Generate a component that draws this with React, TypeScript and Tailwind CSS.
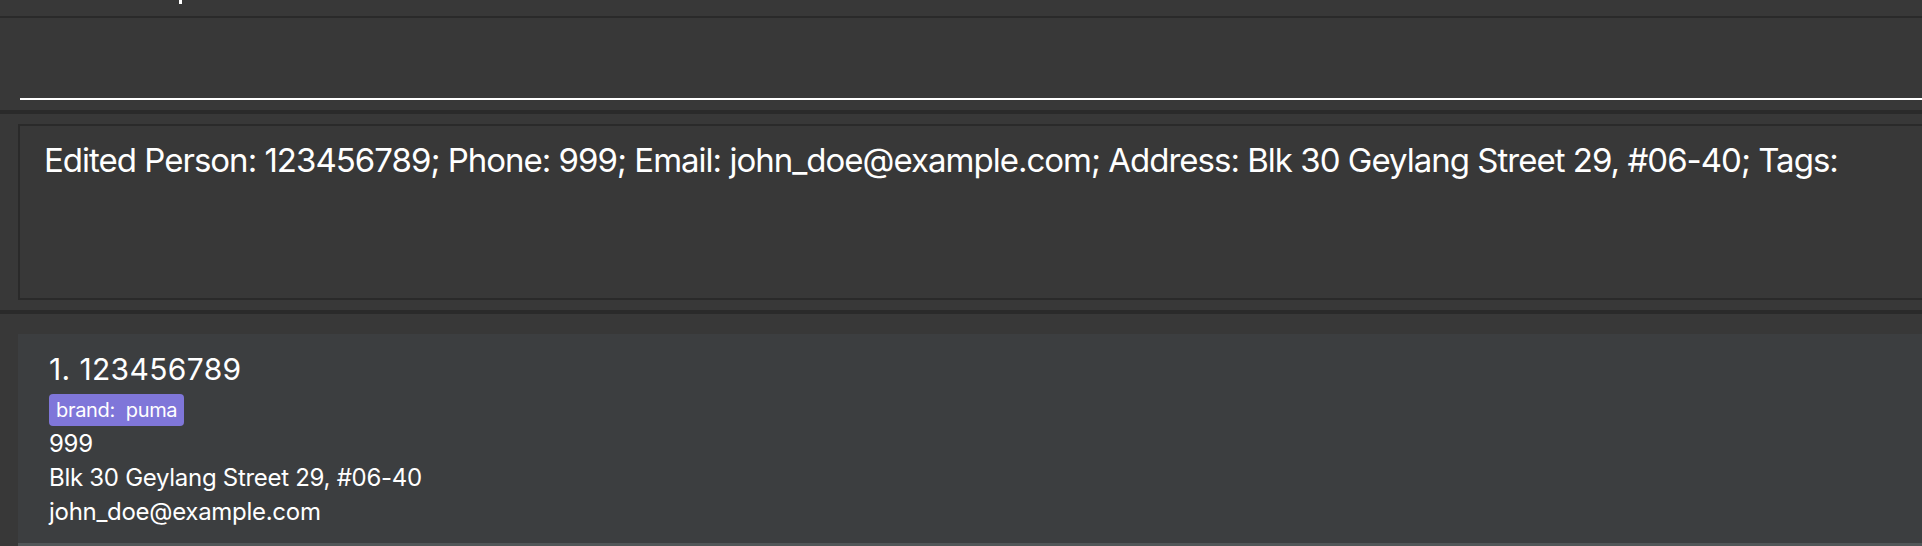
import React from "react";

/* ── Result / person data ─────────────────── */
const result =
  "Edited Person: 123456789; Phone: 999; Email: john_doe@example.com; Address: Blk 30 Geylang Street 29, #06-40; Tags:";

const person = {
  index: 1,
  name: "123456789",
  tags: ["brand:  puma"],
  phone: "999",
  address: "Blk 30 Geylang Street 29, #06-40",
  email: "john_doe@example.com",
};

function PersonCard() {
  return (
    <div className="ml-[18px] h-[209px] bg-[#3c3e40] pl-[31px] pt-[15px] text-white">
      <div className="text-[30px] leading-[40px] tracking-[0.012em]">
        {person.index}. {person.name}
      </div>
      <div className="mt-[5px] flex gap-2">
        {person.tags.map((t) => (
          <span
            key={t}
            className="h-[32px] rounded-[4px] bg-[#7f76d9] px-[7px] text-[20px] leading-[32px] tracking-[-0.015em] whitespace-pre"
          >
            {t}
          </span>
        ))}
      </div>
      <div className="mt-[1px] text-[24px] leading-[34px] tracking-[-0.012em]">{person.phone}</div>
      <div className="text-[24px] leading-[34px] tracking-[-0.012em]">{person.address}</div>
      <div className="text-[24px] leading-[34px] tracking-[-0.012em]">{person.email}</div>
    </div>
  );
}

export default function App() {
  return (
    <div
      className="h-[546px] w-full overflow-hidden bg-[#383838]"
      style={{ fontFamily: "Inter, 'Noto Sans', sans-serif" }}
    >
      {/* clipped menu strip */}
      <div className="relative h-[16px]">
        <div className="absolute left-[179px] top-0 h-[4px] w-[3px] bg-white" />
      </div>
      <div className="h-[2px] bg-[#2a2a2a]" />

      {/* command box */}
      <div className="flex h-[92px] flex-col justify-end pb-[10px] pl-[20px]">
        <div className="h-[2px] bg-white" />
      </div>
      <div className="h-[4px] bg-[#2a2a2a]" />

      {/* result display */}
      <div className="pt-[10px] pb-[10px]">
        <div className="ml-[18px] h-[176px] border-2 border-r-0 border-[#2a2a2a] pl-[24px] pt-[14px] text-[33px] leading-[40px] tracking-[-0.03em] text-white">
          {result}
        </div>
      </div>
      <div className="h-[4px] bg-[#2a2a2a]" />

      {/* person list */}
      <div className="pt-[20px]">
        <PersonCard />
        <div className="ml-[18px] h-[10px] bg-[#515658]" />
      </div>
    </div>
  );
}
